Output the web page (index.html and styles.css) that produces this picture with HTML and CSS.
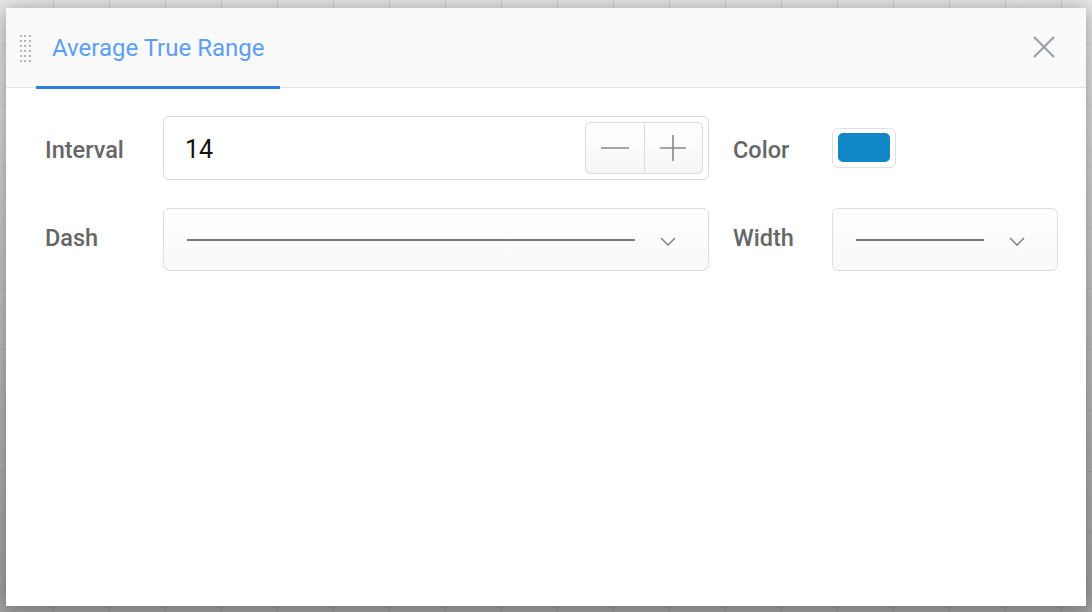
FILE: index.html
```html
<!DOCTYPE html>
<html>
<head>
<meta charset="utf-8">
<link rel="stylesheet" href="styles.css">
</head>
<body>
<div class="page">
<div class="dialog">
  <div class="header">
    <div class="handle">
      <span></span><span></span><span></span>
      <span></span><span></span><span></span>
      <span></span><span></span><span></span>
      <span></span><span></span><span></span>
      <span></span><span></span><span></span>
      <span></span><span></span><span></span>
    </div>
    <div class="tab">Average True Range</div>
    <button class="close" aria-label="Close">
      <svg width="22" height="22" viewBox="0 0 22 22"><path d="M1 1L21 21M21 1L1 21" stroke="#9aa0a6" stroke-width="2.2" fill="none"/></svg>
    </button>
  </div>
  <div class="body">
    <div class="label low">Interval</div>
    <div class="field input">
      <span class="value">14</span>
      <div class="stepper">
        <button class="step"><svg width="28" height="2" viewBox="0 0 28 2"><path d="M0 1H28" stroke="#888" stroke-width="1.6"/></svg></button>
        <button class="step"><svg width="26" height="26" viewBox="0 0 26 26"><path d="M0 13H26M13 0V26" stroke="#888" stroke-width="1.6"/></svg></button>
      </div>
    </div>
    <div class="label label2 low">Color</div>
    <div class="colorcell"><div class="swatch"><div class="chip"></div></div></div>

    <div class="label high">Dash</div>
    <div class="field select">
      <span class="line long"></span>
      <svg class="chev" width="16" height="9" viewBox="0 0 16 9"><path d="M1 1L8 8L15 1" stroke="#777" stroke-width="1.3" fill="none"/></svg>
    </div>
    <div class="label label2 high">Width</div>
    <div class="field select small">
      <span class="line short"></span>
      <svg class="chev" width="16" height="9" viewBox="0 0 16 9"><path d="M1 1L8 8L15 1" stroke="#777" stroke-width="1.3" fill="none"/></svg>
    </div>
  </div>
</div>
</div>
</body>
</html>
```
FILE: styles.css
```css
html, body { margin: 0; padding: 0; }
body {
  font-family: Roboto, "Liberation Sans", sans-serif;
  overflow: hidden;
}
.page {
  width: 1092px;
  height: 612px;
  box-sizing: border-box;
  padding: 8px 6px 6px 6px;
  background-color: #c4c4c4;
  background-image:
    linear-gradient(90deg, rgba(0,0,0,0.09) 1px, transparent 1px),
    linear-gradient(180deg, rgba(0,0,0,0.05) 1px, transparent 1px),
    linear-gradient(180deg, #e7e7e7 0%, #cbcbcb 35%, #b2b2b2 70%, #a0a0a0 100%);
  background-size: 56px 100%, 100% 61px, 100% 100%;
  background-position: 53px 0, 0 44px, 0 0;
}
.dialog {
  width: 1080px;
  height: 598px;
  background: #fff;
  box-shadow: 0 2px 18px rgba(0,0,0,0.35);
  display: flex;
  flex-direction: column;
}
.header {
  height: 79px;
  flex: none;
  background: #f9f9f9;
  border-bottom: 1px solid #e2e2e2;
  display: flex;
  align-items: stretch;
}
.handle {
  width: 12px;
  margin: 27px 0 0 14px;
  display: grid;
  grid-template-columns: repeat(3, 2px);
  grid-auto-rows: 2px;
  column-gap: 2.3px;
  row-gap: 3px;
  align-self: flex-start;
}
.handle span { background: #b5b5b5; width: 2px; height: 2px; }
.tab {
  margin-left: 4px;
  padding: 0 16px;
  color: #5b9ff5;
  font-size: 24px;
  height: 81px;
  line-height: 80px;
  box-sizing: border-box;
  border-bottom: 3px solid #2f7de1;
  margin-bottom: -2px;
}
.close {
  margin-left: auto;
  margin-right: 30px;
  margin-top: 27px;
  width: 24px;
  height: 24px;
  padding: 1px;
  border: 0;
  background: none;
  align-self: flex-start;
}
.close svg { display: block; }
.body {
  padding: 28px 0 0 39px;
  display: grid;
  grid-template-columns: 118px 546px 123px 226px;
  row-gap: 28px;
  align-items: center;
}
.label {
  font-size: 23.5px;
  font-weight: 500;
  color: #666;
}
.low { padding-top: 4px; }
.high { padding-bottom: 3px; }
.label2 { padding-left: 24px; }
.field {
  box-sizing: border-box;
  border: 1px solid #dedede;
  border-radius: 6px;
  display: flex;
  align-items: center;
}
.input {
  height: 64px;
  background: #fff;
  padding: 0 5px 0 21px;
}
.value {
  font-size: 25px;
  color: #111;
  flex: 1;
  padding-top: 2px;
}
.stepper {
  display: flex;
  height: 52px;
  width: 118px;
  box-sizing: border-box;
  border: 1px solid #dcdcdc;
  border-radius: 5px;
  overflow: hidden;
  background: linear-gradient(#fff, #f6f6f6);
}
.step {
  flex: 1;
  border: 0;
  background: none;
  padding: 0;
  display: flex;
  align-items: center;
  justify-content: center;
}
.step + .step { border-left: 1px solid #dcdcdc; }
.colorcell { display: flex; align-items: center; }
.swatch {
  width: 64px;
  height: 40px;
  box-sizing: border-box;
  border: 1px solid #e0e0e0;
  border-radius: 6px;
  padding: 4px 5px 5px 5px;
  background: #fff;
}
.chip {
  width: 100%;
  height: 100%;
  background: #1187c8;
  border-radius: 5px;
}
.select {
  height: 63px;
  background: linear-gradient(#fff, #f8f8f8);
  padding: 0 0 0 23px;
}
.line {
  height: 2px;
  background: #777;
  display: block;
}
.long { width: 448px; }
.short { width: 128px; }
.chev { margin-left: 25px; margin-top: 4px; }
```
